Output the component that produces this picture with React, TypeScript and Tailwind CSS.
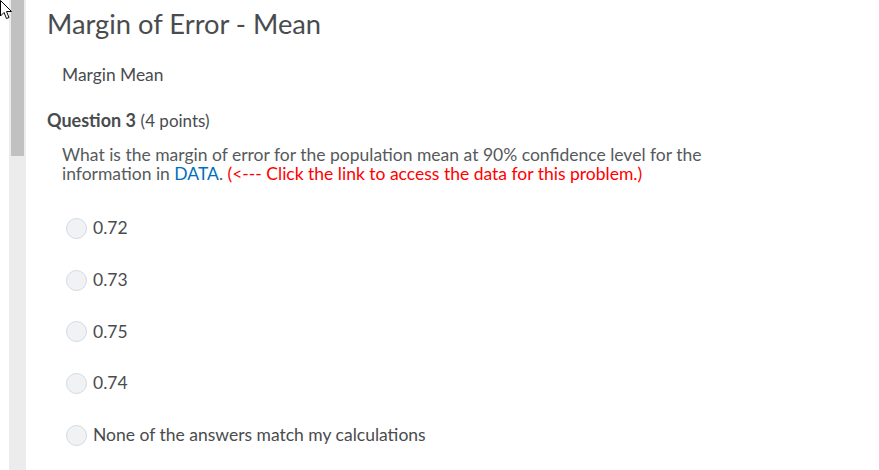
import React from "react";

const options = ["0.72", "0.73", "0.75", "0.74", "None of the answers match my calculations"];

export default function App() {
  return (
    <div className="relative w-[879px] h-[470px] bg-white overflow-hidden flex" style={{ fontFamily: "Lato, 'Open Sans', sans-serif" }}>
      <div className="w-[9px] shrink-0 bg-white" />
      <div className="w-[17px] shrink-0 bg-[#ececec] flex justify-center">
        <div className="w-[13px] h-[156px] bg-[#c1c1c1]" />
      </div>
      <div className="flex-1 pl-[21px] pt-[8px]">
        <h1 className="text-[27.3px] leading-[32px] text-[#494c4e]">Margin of Error - Mean</h1>
        <div className="pl-[15px] mt-[25px] text-[17.4px] leading-[20px] text-[#494c4e]">Margin Mean</div>
        <div className="mt-[24px] text-[18px] leading-[22px] text-[#494c4e]">
          <span className="font-bold">Question 3</span> <span className="text-[17px]">(4 points)</span>
        </div>
        <p className="pl-[15px] mt-[13px] w-[680px] text-[17.5px] leading-[19px] text-[#565a5c]">
          What is the margin of error for the population mean at 90% confidence level for the information in{" "}
          <span className="text-[#006fbf]">DATA</span>.{" "}
          <span className="text-[#ff0000]">(&lt;--- Click the link to access the data for this problem.)</span>
        </p>
        <div className="pl-[19px] mt-[35px] flex flex-col gap-[30.7px]">
          {options.map((o) => (
            <div key={o} className="flex items-center h-[21px]">
              <div className="w-[21px] h-[21px] rounded-full border border-[#d3d9e3] bg-[#f1f2f4]" />
              <span className="ml-[6px] text-[17.5px] text-[#494c4e]">{o}</span>
            </div>
          ))}
        </div>
      </div>
      <svg className="absolute left-0 top-0" width="14" height="20" viewBox="0 0 14 20">
        <path d="M0.5 0.5 L0.5 16 L4 12.5 L6.5 18.5 L9 17.5 L6.5 11.5 L11.5 11.5 Z" fill="white" stroke="black" strokeWidth="1" />
      </svg>
    </div>
  );
}
